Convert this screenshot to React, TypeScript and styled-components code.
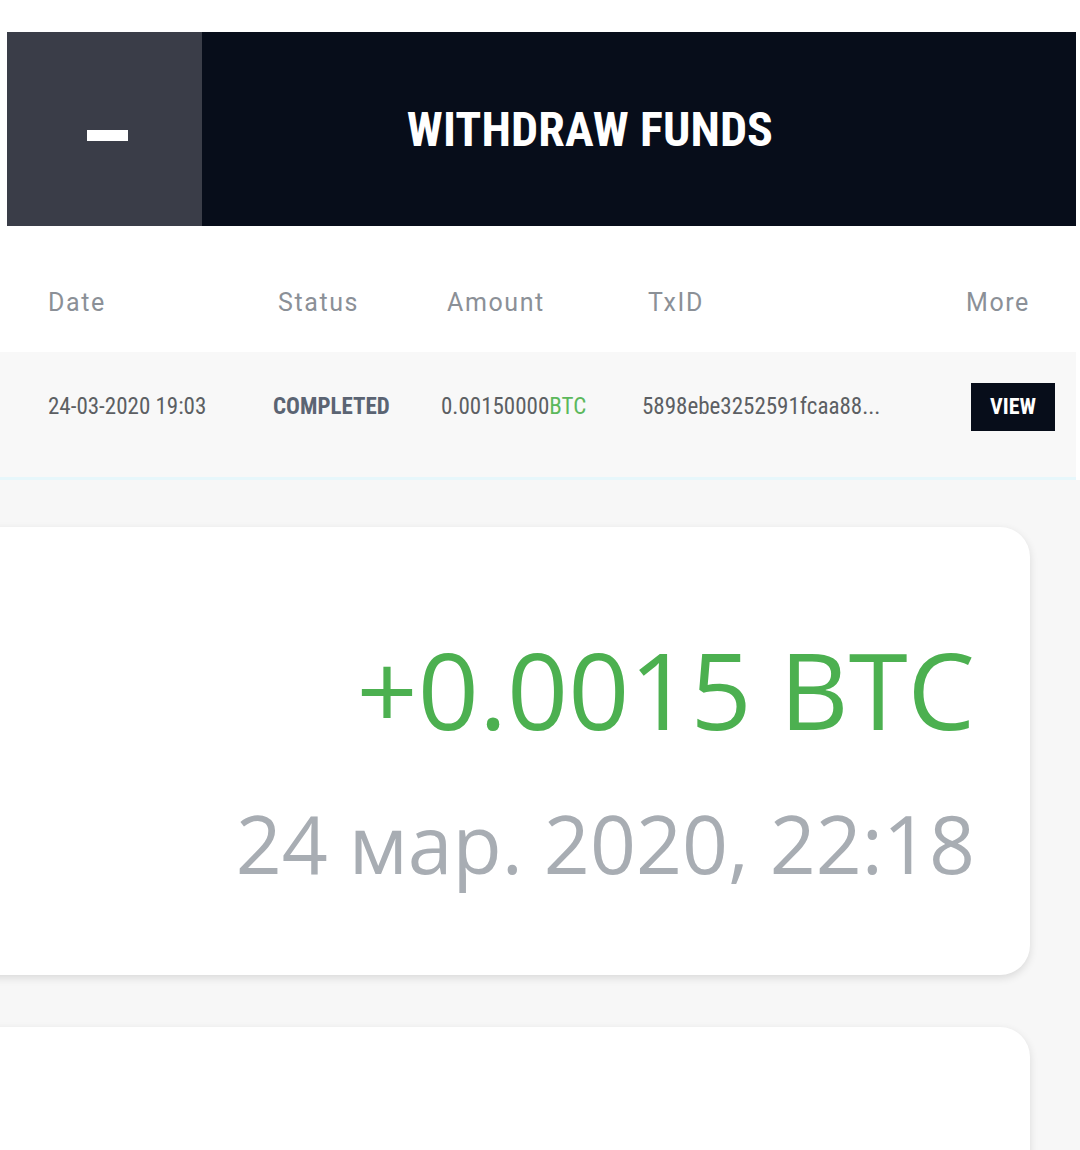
import React from "react";
import styled, { createGlobalStyle } from "styled-components";

const Global = createGlobalStyle`
  html, body { margin: 0; padding: 0; background: #ffffff; }
  body { font-family: Roboto, "Liberation Sans", sans-serif; }
`;

const Page = styled.div`
  width: 1080px;
  height: 1150px;
  overflow: hidden;
  display: flex;
  flex-direction: column;
`;

const Top = styled.div`
  padding: 32px 4px 0 7px;
  background: #ffffff;
`;

const Header = styled.div`
  display: flex;
  height: 194px;
  background: #070d1a;
`;

const Toggle = styled.button`
  width: 195px;
  flex: none;
  border: 0;
  background: #3a3d48;
  display: flex;
  align-items: center;
  justify-content: center;
  cursor: pointer;
`;

const Minus = styled.span`
  display: block;
  width: 41px;
  height: 11px;
  background: #ffffff;
  margin-left: 6px;
  margin-top: 12px;
`;

const Title = styled.h1`
  flex: 1;
  margin: 0;
  display: flex;
  align-items: center;
  justify-content: center;
  color: #ffffff;
  font-family: "Roboto Condensed", "Liberation Sans Narrow", Roboto, sans-serif;
  font-weight: 700;
  font-size: 48px;
  letter-spacing: 0.1px;
  padding-right: 98px;
`;

const Table = styled.div`
  margin-right: 4px;
`;

const HeadRow = styled.div`
  display: grid;
  grid-template-columns: 48px 230px 169px 201px 318px 1fr;
  height: 126px;
  box-sizing: border-box;
  padding-top: 26px;
  align-items: center;
  background: #ffffff;
  font-family: Roboto, sans-serif;
  font-weight: 300;
  font-size: 25px;
  letter-spacing: 1.6px;
  color: #8b9097;
`;

const DataRow = styled.div`
  display: grid;
  grid-template-columns: 48px 225px 168px 201px 329px 1fr;
  height: 128px;
  box-sizing: border-box;
  padding-bottom: 16px;
  align-items: center;
  background: #f8f8f8;
  border-bottom: 3px solid #e7f7fb;
  font-family: "Roboto Condensed", "Liberation Sans Narrow", Roboto, sans-serif;
  font-size: 23px;
  color: #5c5f63;
`;

const Cell = styled.div<{ $bold?: boolean }>`
  white-space: nowrap;
  font-weight: ${(p) => (p.$bold ? 700 : 400)};
  color: ${(p) => (p.$bold ? "#5b6473" : "inherit")};
`;

const Green = styled.span`
  color: #5cb85c;
`;

const ViewBtn = styled.button`
  display: block;
  width: 84px;
  height: 48px;
  border: 0;
  background: #070d1a;
  color: #ffffff;
  font-family: "Roboto Condensed", "Liberation Sans Narrow", Roboto, sans-serif;
  font-weight: 700;
  font-size: 22px;
  cursor: pointer;
`;

const Feed = styled.div`
  flex: 1;
  background: #f7f7f7;
  padding: 47px 0 0 0;
  display: flex;
  flex-direction: column;
  gap: 52px;
`;

const Card = styled.div`
  margin-left: -60px;
  width: 1090px;
  background: #ffffff;
  border-radius: 30px;
  box-shadow: 0 3px 8px rgba(0, 0, 0, 0.12);
  box-sizing: border-box;
  padding: 98px 55px 0 0;
  display: flex;
  flex-direction: column;
  align-items: flex-end;
  height: 448px;
  flex: none;
`;

const Amount = styled.div`
  font-family: "Open Sans", "Noto Sans", sans-serif;
  font-size: 107px;
  line-height: 1.2;
  color: #4cb050;
`;

const When = styled.div`
  font-family: "Open Sans", "Noto Sans", sans-serif;
  font-size: 80.5px;
  line-height: 1.2;
  margin-top: 42px;
  color: #a8adb3;
`;

export default function App() {
  return (
    <Page>
      <Global />
      <Top>
        <Header>
          <Toggle aria-label="collapse">
            <Minus />
          </Toggle>
          <Title>WITHDRAW FUNDS</Title>
        </Header>
      </Top>
      <Table>
        <HeadRow>
          <span />
          <Cell>Date</Cell>
          <Cell>Status</Cell>
          <Cell>Amount</Cell>
          <Cell>TxID</Cell>
          <Cell>More</Cell>
        </HeadRow>
        <DataRow>
          <span />
          <Cell>24-03-2020 19:03</Cell>
          <Cell $bold>COMPLETED</Cell>
          <Cell>
            0.00150000<Green>BTC</Green>
          </Cell>
          <Cell>5898ebe3252591fcaa88...</Cell>
          <Cell>
            <ViewBtn>VIEW</ViewBtn>
          </Cell>
        </DataRow>
      </Table>
      <Feed>
        <Card>
          <Amount>+0.0015 BTC</Amount>
          <When>24 мар. 2020, 22:18</When>
        </Card>
        <Card />
      </Feed>
    </Page>
  );
}
